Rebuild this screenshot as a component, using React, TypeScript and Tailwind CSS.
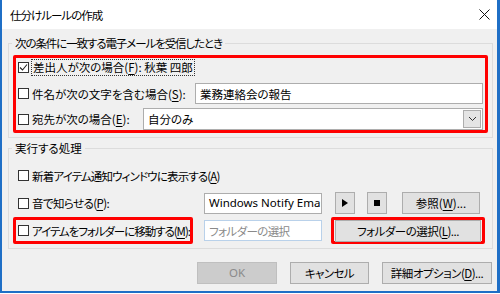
import React from "react";

const JP = "[font-family:'Noto_Sans_CJK_JP',sans-serif] [font-feature-settings:'palt']";

function U({ c }: { c: string }) {
  return <span className="underline underline-offset-[2px] decoration-[1px]">{c}</span>;
}

function Box({ checked }: { checked?: boolean }) {
  return (
    <span className="w-[11px] h-[11px] border border-[#333333] bg-white flex items-center justify-center shrink-0">
      {checked && (
        <svg width="9" height="9" viewBox="0 0 9 9">
          <polyline points="1,4.5 3.5,7 8,1.5" fill="none" stroke="#222" strokeWidth="1.1" />
        </svg>
      )}
    </span>
  );
}

function Btn({ children, w, disabled }: { children: React.ReactNode; w: string; disabled?: boolean }) {
  return (
    <div
      className={
        "h-[22px] flex items-center justify-center border shrink-0 whitespace-nowrap " +
        w +
        (disabled ? " bg-[#cccccc] border-[#bfbfbf] text-[#8a8a8a]" : " bg-[#e1e1e1] border-[#adadad] text-black")
      }
    >
      {children}
    </div>
  );
}

export default function App() {
  return (
    <div className={"w-[500px] h-[294px] bg-white text-[11.5px] leading-[16px] text-black " + JP}>
      <div className="w-[500px] h-[293px] border-l-2 border-r-[3px] border-b-2 border-[#1f6fc6] flex flex-col">
        {/* title bar */}
        <div className="h-[29px] shrink-0 bg-white flex items-center pl-[8px] pr-[7px]">
          <span className="tracking-[-1px]">仕分けルールの作成</span>
          <svg className="ml-auto" width="11" height="11" viewBox="0 0 11 11">
            <path d="M0.5 0.5 L10.5 10.5 M10.5 0.5 L0.5 10.5" stroke="#111" strokeWidth="1" />
          </svg>
        </div>

        {/* body */}
        <div className="flex-1 bg-[#f0f0f0] pl-[6px] pr-[4px] flex flex-col">
          {/* group 1 */}
          <fieldset className="mt-[6px] border border-[#dcdcdc] pb-[4px]">
            <legend className="ml-[3px] px-[3px] leading-[16px] tracking-[-1.1px]">次の条件に一致する電子メールを受信したとき</legend>
            <div className="mt-[4px] ml-[4px] mr-[4px] border-[3px] border-[#ff0000] rounded-[2px] pr-[2px] flex flex-col">
              <div className="h-[19px] flex items-center pl-[2px]">
                <Box checked />
                <span className="ml-[2px] px-[1px] border border-dotted border-[#333] leading-[15px] whitespace-nowrap">
                  差出人が次の場合(<U c="F" />): 秋葉 四郎
                </span>
              </div>
              <div className="h-[21px] mt-[6px] flex items-center">
                <div className="w-[179px] shrink-0 flex items-center pl-[2px]">
                  <Box />
                  <span className="ml-[3px] whitespace-nowrap">
                    件名が次の文字を含む場合(<U c="S" />):
                  </span>
                </div>
                <div className="flex-1 h-[21px] bg-white border border-[#adadad] flex items-center pl-[4px]">
                  業務連絡会の報告
                </div>
              </div>
              <div className="h-[22px] mt-[4px] flex items-center">
                <div className="w-[127px] shrink-0 flex items-center pl-[2px]">
                  <Box />
                  <span className="ml-[3px] whitespace-nowrap">
                    宛先が次の場合(<U c="E" />):
                  </span>
                </div>
                <div className="flex-1 h-[22px] bg-white border border-[#adadad] flex items-center pl-[4px] pr-[1px]">
                  <span>自分のみ</span>
                  <span className="ml-auto w-[18px] h-[18px] bg-[#e5e5e5] border border-[#adadad] flex items-center justify-center">
                    <svg width="9" height="6" viewBox="0 0 9 6">
                      <polyline points="1,1 4.5,4.5 8,1" fill="none" stroke="#333" strokeWidth="1" />
                    </svg>
                  </span>
                </div>
              </div>
            </div>
          </fieldset>

          {/* group 2 */}
          <fieldset className="mt-[2px] border border-[#dcdcdc] pb-[4px]">
            <legend className="ml-[3px] px-[3px] leading-[16px]">実行する処理</legend>
            <div className="mt-[10px] h-[19px] flex items-center pl-[9px]">
              <Box />
              <span className="ml-[3px] whitespace-nowrap tracking-[-0.85px]">
                新着アイテム通知ウィンドウに表示する(<U c="A" />)
              </span>
            </div>
            <div className="mt-[7px] h-[22px] flex items-center">
              <div className="w-[195px] shrink-0 flex items-center pl-[9px]">
                <Box />
                <span className="ml-[3px] whitespace-nowrap tracking-[-0.6px]">
                  音で知らせる(<U c="P" />):
                </span>
              </div>
              <div className="w-[118px] h-[21px] shrink-0 bg-white border border-[#adadad] flex items-center pl-[4px] overflow-hidden whitespace-nowrap [font-family:'Noto_Sans',sans-serif] text-[11.5px]">
                Windows Notify Ema
              </div>
              <div className="ml-[13px]">
                <Btn w="w-[20px]">
                  <svg width="6" height="8" viewBox="0 0 6 8">
                    <polygon points="0,0 6,4 0,8" fill="#000" />
                  </svg>
                </Btn>
              </div>
              <div className="ml-[12px]">
                <Btn w="w-[20px]">
                  <span className="w-[6px] h-[6px] bg-black" />
                </Btn>
              </div>
              <div className="ml-[15px]">
                <Btn w="w-[78px]">
                  参照(<U c="W" />)...
                </Btn>
              </div>
            </div>
            <div className="mt-[3px] h-[27px] flex items-center">
              <div className="ml-[4px] w-[180px] h-[27px] shrink-0 border-[3px] border-[#ff0000] rounded-[2px] flex items-center pl-[2px] overflow-hidden">
                <Box />
                <span className="ml-[3px] whitespace-nowrap tracking-[-1.05px]">
                  アイテムをフォルダーに移動する(<U c="M" />):
                </span>
              </div>
              <div className="ml-[11px] w-[118px] h-[21px] shrink-0 bg-white border border-[#b9d1ea] flex items-center pl-[4px] text-[#8a8a8a] whitespace-nowrap tracking-[-0.6px]">
                フォルダーの選択
              </div>
              <div className="ml-[9px] w-[154px] h-[27px] shrink-0 border-[3px] border-[#ff0000] rounded-[2px] flex items-center px-[1px]">
                <Btn w="w-full">
                  <span className="tracking-[-0.5px]">
                    フォルダーの選択(<U c="L" />)...
                  </span>
                </Btn>
              </div>
            </div>
          </fieldset>

          {/* bottom buttons */}
          <div className="mt-[13px] flex justify-end pr-[1px] gap-[13px]">
            <Btn w="w-[80px]" disabled>
              <span className="[font-family:'Noto_Sans',sans-serif]">OK</span>
            </Btn>
            <Btn w="w-[79px]">
              <span className="tracking-[-0.6px]">キャンセル</span>
            </Btn>
            <Btn w="w-[110px]">
              <span className="tracking-[-0.5px]">
                詳細オプション(<U c="D" />)...
              </span>
            </Btn>
          </div>
        </div>
      </div>
    </div>
  );
}
